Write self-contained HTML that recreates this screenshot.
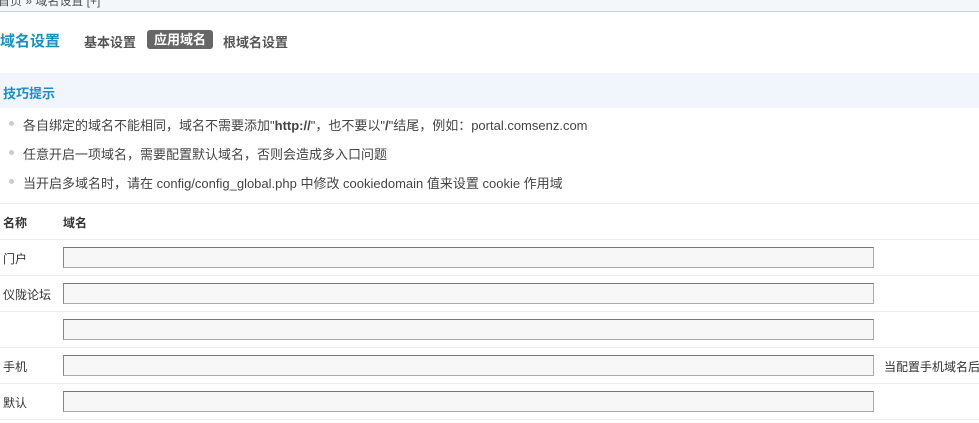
<!DOCTYPE html><html><head><meta charset="utf-8"><style>
*{margin:0;padding:0;box-sizing:border-box}
body{width:979px;height:423px;overflow:hidden;background:#fff;font-family:"Liberation Sans","Noto Sans CJK SC",sans-serif;font-size:12px;color:#333;position:relative}
.a{position:absolute;white-space:nowrap}
.top{left:0;top:0;width:979px;height:12px;background:#f3f7fa;border-bottom:1px solid #c5d3df}
.inp{position:absolute;left:63px;width:811px;height:21px;background:#f7f7f7;border:1px solid #aaa;border-top-color:#777;border-left-color:#888}
.line{position:absolute;left:0;width:979px;height:1px;background:#eee}
.b{position:absolute;left:9px;width:5px;height:5px;background:#ccc;border-radius:50%}
.t{font-size:13px;color:#444}
</style></head><body>
<div class="a top"></div>
<div class="a" style="left:-2px;top:-8px;color:#555">首页 » 域名设置 [+]</div>
<div class="a" style="left:0;top:30px;font-size:15px;font-weight:bold;color:#1a8fc0">域名设置</div>
<div class="a" style="left:84px;top:32px;font-size:13px;font-weight:bold;color:#555">基本设置</div>
<div class="a" style="left:147px;top:30px;width:66px;height:19px;background:#666;border-radius:3px;color:#fff;font-weight:bold;font-size:13px;text-align:center;line-height:19px">应用域名</div>
<div class="a" style="left:223px;top:32px;font-size:13px;font-weight:bold;color:#555">根域名设置</div>
<div class="a" style="left:0;top:73px;width:979px;height:35px;background:#f0f6fb"></div>
<div class="a" style="left:3px;top:83px;font-size:13px;font-weight:bold;color:#1a8fc0">技巧提示</div>
<div class="b" style="top:121px"></div><div class="a t" style="left:23px;top:115px">各自绑定的域名不能相同，域名不需要添加"<b>http://</b>"，也不要以"<b>/</b>"结尾，例如：portal.comsenz.com</div>
<div class="b" style="top:150px"></div><div class="a t" style="left:23px;top:144px">任意开启一项域名，需要配置默认域名，否则会造成多入口问题</div>
<div class="b" style="top:179px"></div><div class="a t" style="left:23px;top:173px">当开启多域名时，请在 config/config_global.php 中修改 cookiedomain 值来设置 cookie 作用域</div>
<div class="line" style="top:203px"></div>
<div class="a" style="left:3px;top:214px;font-weight:bold">名称</div>
<div class="a" style="left:63px;top:214px;font-weight:bold">域名</div>
<div class="line" style="top:239px"></div>
<div class="a" style="left:3px;top:250px">门户</div><div class="inp" style="top:247px"></div>
<div class="line" style="top:275px"></div>
<div class="a" style="left:3px;top:286px">仪陇论坛</div><div class="inp" style="top:283px"></div>
<div class="line" style="top:311px"></div>
<div class="inp" style="top:319px"></div>
<div class="line" style="top:347px"></div>
<div class="a" style="left:3px;top:358px">手机</div><div class="inp" style="top:355px"></div>
<div class="a" style="left:884px;top:358px">当配置手机域名后</div>
<div class="line" style="top:383px"></div>
<div class="a" style="left:3px;top:394px">默认</div><div class="inp" style="top:391px"></div>
<div class="line" style="top:419px"></div>
</body></html>
